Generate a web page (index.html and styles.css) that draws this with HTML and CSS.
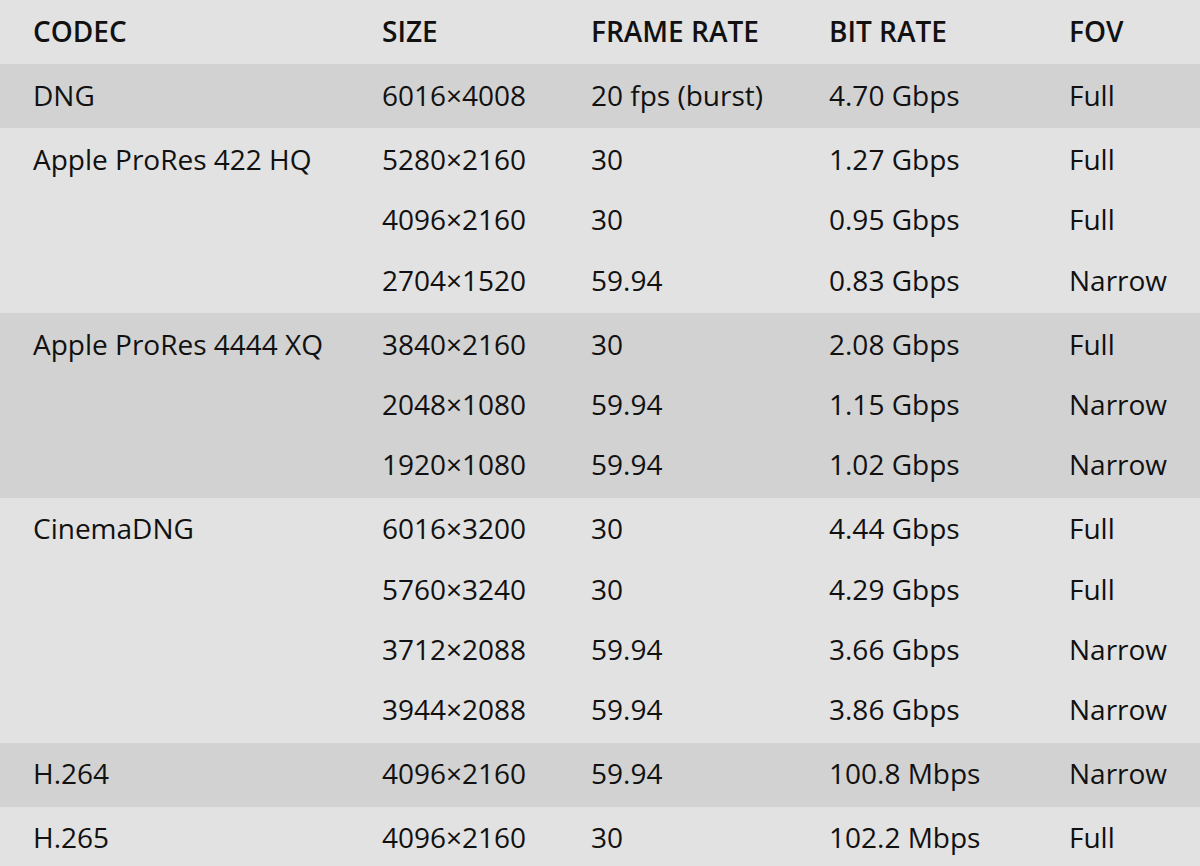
FILE: index.html
```html
<!DOCTYPE html>
<html lang="en">
<head>
<meta charset="utf-8">
<title>Codec table</title>
<link rel="stylesheet" href="styles.css">
</head>
<body>
<div class="table">
  <div class="group head">
    <div class="cell">CODEC</div>
    <div class="cell">SIZE</div>
    <div class="cell">FRAME RATE</div>
    <div class="cell">BIT RATE</div>
    <div class="cell">FOV</div>
  </div>
  <div class="group dark">
    <div class="cell codec">DNG</div>
    <div class="cell">6016×4008</div><div class="cell">20 fps (burst)</div><div class="cell">4.70 Gbps</div><div class="cell">Full</div>
  </div>
  <div class="group">
    <div class="cell codec span3">Apple ProRes 422 HQ</div>
    <div class="cell">5280×2160</div><div class="cell">30</div><div class="cell">1.27 Gbps</div><div class="cell">Full</div>
    <div class="cell">4096×2160</div><div class="cell">30</div><div class="cell">0.95 Gbps</div><div class="cell">Full</div>
    <div class="cell">2704×1520</div><div class="cell">59.94</div><div class="cell">0.83 Gbps</div><div class="cell">Narrow</div>
  </div>
  <div class="group dark">
    <div class="cell codec span3">Apple ProRes 4444 XQ</div>
    <div class="cell">3840×2160</div><div class="cell">30</div><div class="cell">2.08 Gbps</div><div class="cell">Full</div>
    <div class="cell">2048×1080</div><div class="cell">59.94</div><div class="cell">1.15 Gbps</div><div class="cell">Narrow</div>
    <div class="cell">1920×1080</div><div class="cell">59.94</div><div class="cell">1.02 Gbps</div><div class="cell">Narrow</div>
  </div>
  <div class="group">
    <div class="cell codec span4">CinemaDNG</div>
    <div class="cell">6016×3200</div><div class="cell">30</div><div class="cell">4.44 Gbps</div><div class="cell">Full</div>
    <div class="cell">5760×3240</div><div class="cell">30</div><div class="cell">4.29 Gbps</div><div class="cell">Full</div>
    <div class="cell">3712×2088</div><div class="cell">59.94</div><div class="cell">3.66 Gbps</div><div class="cell">Narrow</div>
    <div class="cell">3944×2088</div><div class="cell">59.94</div><div class="cell">3.86 Gbps</div><div class="cell">Narrow</div>
  </div>
  <div class="group dark">
    <div class="cell codec">H.264</div>
    <div class="cell">4096×2160</div><div class="cell">59.94</div><div class="cell">100.8 Mbps</div><div class="cell">Narrow</div>
  </div>
  <div class="group">
    <div class="cell codec">H.265</div>
    <div class="cell">4096×2160</div><div class="cell">30</div><div class="cell">102.2 Mbps</div><div class="cell">Full</div>
  </div>
</div>
</body>
</html>
```

FILE: styles.css
```css
html, body {
  margin: 0;
  padding: 0;
  background: #e2e2e2;
}
body {
  font-family: "Open Sans", "Liberation Sans", sans-serif;
  font-size: 28px;
  color: #111111;
}
.table {
  display: flex;
  flex-direction: column;
}
.group {
  display: grid;
  grid-template-columns: 349px 209px 238px 240px 1fr;
  grid-auto-rows: 60.4px;
  padding: 1.8px 0 1.8px 33px;
  background: #e2e2e2;
}
.group.dark {
  background: #d2d2d2;
}
.cell {
  line-height: 58px;
  white-space: nowrap;
}
.head .cell {
  font-weight: 600;
}
.span3 { grid-row: span 3; }
.span4 { grid-row: span 4; }
```
